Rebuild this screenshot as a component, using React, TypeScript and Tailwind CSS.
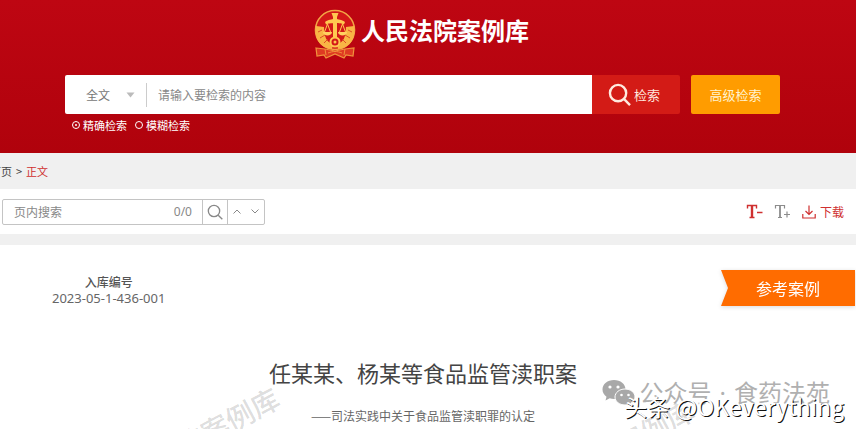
import { useState } from 'react';

const WATERMARK = '人民法院案例库';

function CourtEmblem() {
  return (
    <svg width="44" height="50" viewBox="0 0 44 50" fill="none" aria-hidden="true">
      <circle cx="22" cy="21" r="19.500" fill="#d31818" stroke="#f3a545" strokeWidth="1.600" />
      <path d="M3 17c-2 14 5 22 16 23l1-5C14 34 11 28 11 18z" fill="#f9b545" />
      <path d="M41 17c2 14-5 22-16 23l-1-5c6-1 9-7 9-17z" fill="#f9b545" />
      <path d="M5 23l4-2M7 29l5-3M11 34l4-4M39 23l-4-2M37 29l-5-3M33 34l-4-4" stroke="#d6331c" strokeWidth="0.800" />
      <path d="M20 8l-1.500-4h7L24 8v23h-4z" fill="#ffc850" />
      <path d="M12 13c4-3 6-1.500 10-4 4 2.500 6 1 10 4l-1 2.500c-4-2-6-.5-9-2-3 1.500-5 0-9 2z" fill="#ffc850" />
      <path d="M14.500 15l-3 8m3-8l3 8M29.500 15l-3 8m3-8l3 8" stroke="#ffc850" strokeWidth="1" />
      <path d="M10 23h9c0 4.500-9 4.500-9 0zM25 23h9c0 4.500-9 4.500-9 0z" fill="#ffd060" />
      <circle cx="22" cy="33" r="4.500" fill="#d31818" stroke="#ffc850" strokeWidth="2" />
      <circle cx="22" cy="33" r="1.500" fill="#ffc850" />
      <path d="M3 39l9 1 10 2 10-2 9-1-1 8-7-1-2 3-9-4-9 4-2-3-7 1z" fill="#df3a22" stroke="#f0933c" strokeWidth="1.200" />
      <path d="M12 40l1 6M32 40l-1 6M15 44c5-2 9-2 14 0" stroke="#f0933c" strokeWidth="1" />
    </svg>
  );
}

function SearchIcon({ className }: { className: string }) {
  return (
    <svg className={className} viewBox="0 0 24 24" fill="none" stroke="currentColor" aria-hidden="true">
      <circle cx="10.500" cy="10.500" r="8.500" />
      <path d="M16.800 16.800L23 23" />
    </svg>
  );
}

function WechatIcon() {
  return (
    <svg width="34" height="28" viewBox="0 0 34 28" aria-hidden="true">
      <path d="M12 1C5.500 1 0.500 5 0.500 10.500c0 3 1.600 5.500 4 7.200L3.500 21.500l4.200-2.200c1.300.4 2.800.6 4.300.6 6.500 0 11.500-4 11.500-9.400S18.500 1 12 1z" fill="#a8a8a8" />
      <circle cx="8" cy="8" r="1.600" fill="#fff" />
      <circle cx="16" cy="8" r="1.600" fill="#fff" />
      <path d="M23 10c-5.500 0-10 3.500-10 8s4.500 8 10 8c1.200 0 2.400-.2 3.500-.5l3.400 1.800-.9-3.100c2.400-1.500 4-3.700 4-6.200 0-4.500-4.500-8-10-8z" fill="#a8a8a8" stroke="#fff" strokeWidth="1" />
      <circle cx="19.500" cy="16" r="1.300" fill="#fff" />
      <circle cx="26.500" cy="16" r="1.300" fill="#fff" />
    </svg>
  );
}

function Header() {
  const [mode, setMode] = useState('exact');

  return (
    <header className="bg-linear-to-b from-[#be0612] to-[#b0020c] pt-2 pr-19 pb-5 pl-[65px]">
      <div className="flex h-[52px] items-center justify-center gap-1 pr-[3px]">
        <CourtEmblem />
        <h1 className="pb-2 text-2xl font-bold text-white">人民法院案例库</h1>
      </div>
      <form className="mt-[15px]" onSubmit={(e) => e.preventDefault()}>
        <div className="flex h-[39px] gap-[11px]">
          <div className="flex flex-1 overflow-hidden rounded-xs">
            <div className="flex flex-1 items-center bg-white text-xs text-[#777]">
              <label className="relative flex w-[82px] items-center border-r border-[#ccc]">
                <select aria-label="检索范围" className="h-6 w-full appearance-none pl-[21px] outline-none">
                  <option>全文</option>
                </select>
                <svg className="absolute right-[11px]" width="9" height="6" viewBox="0 0 9 6" aria-hidden="true">
                  <path d="M0.500 0.500h8L4.500 5.500z" fill="#bbb" />
                </svg>
              </label>
              <input
                aria-label="检索内容"
                placeholder="请输入要检索的内容"
                className="min-w-0 flex-1 px-[11px] outline-none placeholder:text-[#888]"
              />
            </div>
            <button type="submit" className="flex w-[88px] items-center justify-center gap-[3px] bg-[#d31b16] pr-1 text-[13px] text-[#ffe9df]">
              <SearchIcon className="size-[23px] stroke-[2.5]" />
              检索
            </button>
          </div>
          <button type="button" className="w-[89px] rounded-xs bg-[#ff9c00] text-[13px] text-[#fff3d0]">
            高级检索
          </button>
        </div>
        <div className="mt-[3px] flex h-4 gap-2 pl-[7px] text-[11px] leading-4 text-white">
          {[
            { id: 'exact', label: '精确检索' },
            { id: 'fuzzy', label: '模糊检索' },
          ].map((m) => (
            <label key={m.id} className="flex items-center gap-[3px]">
              <input
                type="radio"
                name="mode"
                checked={mode === m.id}
                onChange={() => setMode(m.id)}
                className="size-2 appearance-none rounded-full border border-white checked:bg-white checked:bg-clip-content checked:p-[2px]"
              />
              {m.label}
            </label>
          ))}
        </div>
      </form>
    </header>
  );
}

function Toolbar() {
  return (
    <div className="flex h-[45px] items-center justify-between bg-white pr-3 pl-[2px]">
      <div className="flex h-[26px] w-[263px] items-center rounded-xs border border-[#c4c4c4] text-xs text-[#888]">
        <input aria-label="页内搜索" placeholder="页内搜索" className="min-w-0 flex-1 pl-[11px] outline-none placeholder:text-[#888]" />
        <span className="pr-[10px] font-['Noto_Sans']">0/0</span>
        <button aria-label="搜索" className="flex h-full w-[26px] items-center justify-center border-x border-[#c4c4c4]">
          <SearchIcon className="size-4 stroke-2" />
        </button>
        <button aria-label="上一个" className="flex h-full w-[18px] items-center justify-center">
          <svg width="8" height="5" viewBox="0 0 8 5" fill="none" stroke="currentColor"><path d="M0.500 4.500L4 1l3.500 3.500" /></svg>
        </button>
        <button aria-label="下一个" className="flex h-full w-[18px] items-center justify-center">
          <svg width="8" height="5" viewBox="0 0 8 5" fill="none" stroke="currentColor"><path d="M0.500 0.500L4 4l3.500-3.500" /></svg>
        </button>
      </div>
      <div className="flex items-center gap-[11px]">
        <button aria-label="缩小字号" className="text-[#cf3030]">
          <svg width="17" height="15" viewBox="0 0 17 15" fill="none" stroke="currentColor" aria-hidden="true">
            <path d="M1.500 4.500V1.500h9v3M3.500 13.500h5" strokeWidth="1.400" />
            <path d="M6 1.500v12" strokeWidth="2.400" />
            <path d="M11 8.500h5.500" strokeWidth="1.500" />
          </svg>
        </button>
        <button aria-label="放大字号" className="text-[#8c8c8c]">
          <svg width="17" height="15" viewBox="0 0 17 15" fill="none" stroke="currentColor" aria-hidden="true">
            <path d="M1.500 4.500V1.500h9v3M4 13.500h4" strokeWidth="1.200" />
            <path d="M6 1.500v12" strokeWidth="1.800" />
            <path d="M10 10.500h6M13 7.500v6" strokeWidth="1.200" />
          </svg>
        </button>
        <button className="flex items-center gap-1 text-xs text-[#cf3030]">
          <svg width="14" height="14" viewBox="0 0 14 14" fill="none" stroke="currentColor" strokeWidth="1.200" aria-hidden="true">
            <path d="M7 0.500v9M3.500 6L7 9.500 10.500 6M0.800 9v4h12.400V9" />
          </svg>
          下载
        </button>
      </div>
    </div>
  );
}

export default function App() {
  return (
    <div className="flex min-h-screen flex-col bg-[#f0f0f0] font-['Noto_Sans_CJK_SC',sans-serif]">
      <Header />
      <nav className="-ml-[10px] flex h-9 items-center gap-1 text-[11px] text-[#444]">
        <a href="#">首页</a>
        <span>&gt;</span>
        <a href="#" className="text-[#cf3030]">正文</a>
      </nav>
      <Toolbar />
      <main className="relative mt-[11px] flex-1 overflow-hidden bg-white pt-[25px]">
        <div className="flex items-start justify-between">
          <dl className="ml-[52px] pt-1 text-center text-[#666]">
            <dt className="text-xs leading-4 font-medium text-[#555]">入库编号</dt>
            <dd className="font-['Noto_Sans'] text-[13px] leading-4">2023-05-1-436-001</dd>
          </dl>
          <div className="mr-px h-9 w-[134px] drop-shadow-sm">
            <div className="flex h-full items-center justify-center bg-[#ff6c00] text-base text-white [clip-path:polygon(0_0,100%_0,100%_100%,0_100%,7px_50%)]">
              参考案例
            </div>
          </div>
        </div>
        <h2 className="mt-[50px] pr-[10px] text-center text-[22px] leading-8 text-[#444]">任某某、杨某等食品监管渎职案</h2>
        <p className="mt-5 pr-[10px] text-center text-xs leading-4 text-[#666]">——司法实践中关于食品监管渎职罪的认定</p>

        <div className="pointer-events-none select-none" aria-hidden="true">
          <span className="absolute top-[175px] left-[92px] -rotate-28 text-[28px] font-medium whitespace-nowrap text-black/15">{WATERMARK}</span>
          <span className="absolute top-[187px] left-[507px] -rotate-28 text-[28px] font-medium whitespace-nowrap text-black/15">{WATERMARK}</span>
        </div>
        <div className="absolute top-[131px] right-[26px] flex items-center gap-1 text-2xl font-normal text-[#b0b0b0]">
          <WechatIcon />
          <span>
            公众号<span className="px-2 font-['Noto_Sans']">·</span>食药法苑
          </span>
        </div>
        <div className="absolute right-3 bottom-[7px] text-[23px] leading-8 text-white text-shadow-[1px_1px_0_#111]">
          头条 @OKeverything
        </div>
      </main>
    </div>
  );
}
